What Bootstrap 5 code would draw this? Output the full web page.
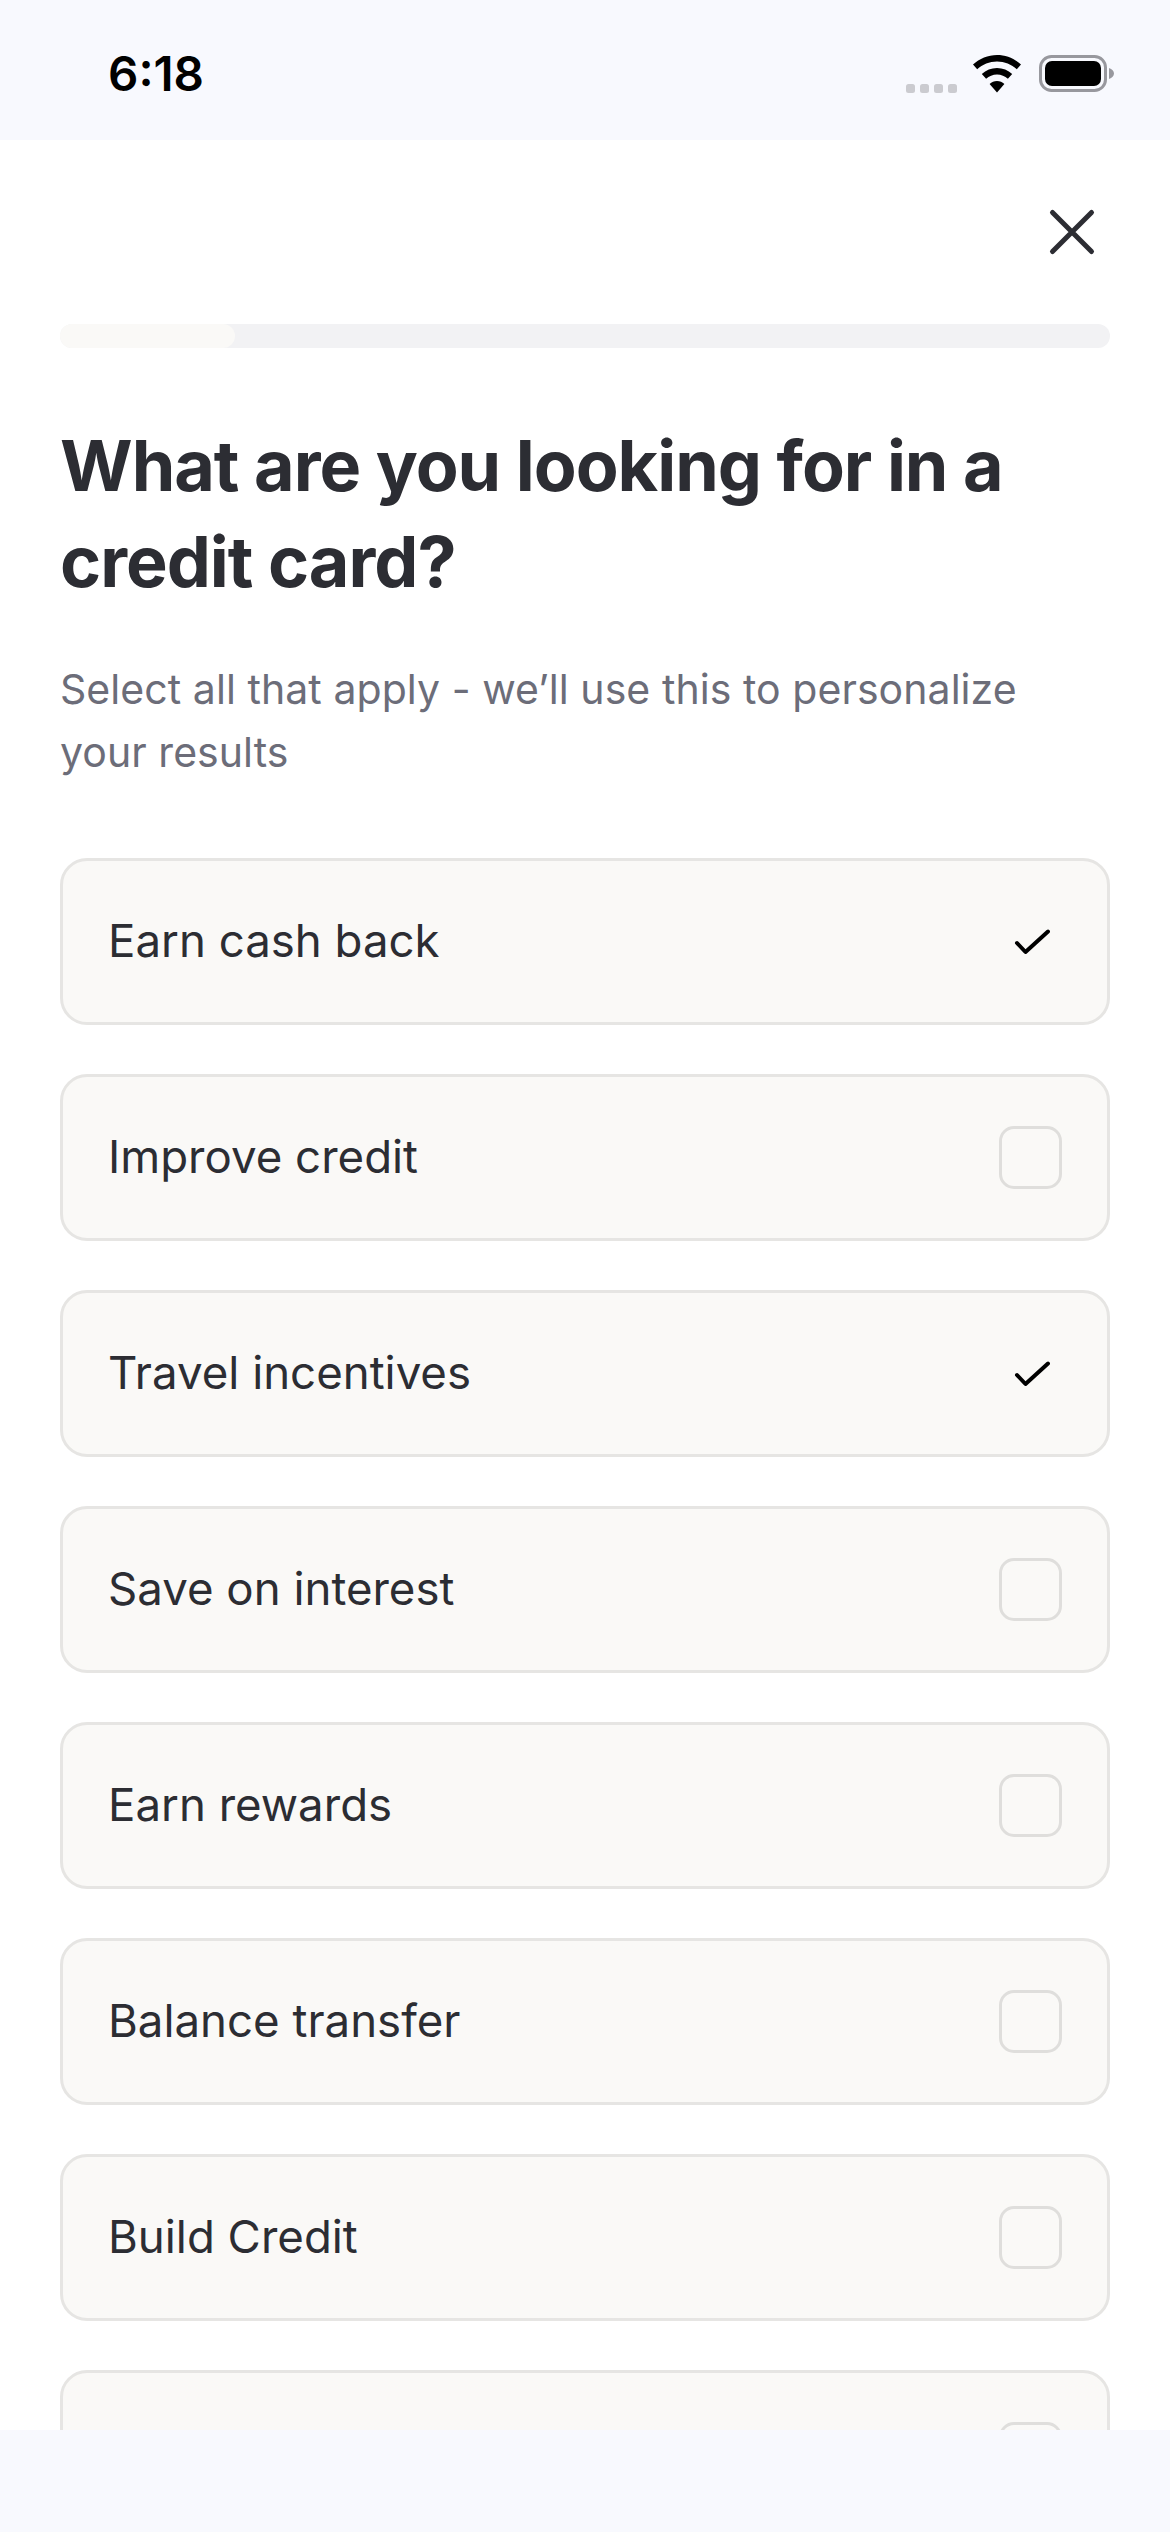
<!DOCTYPE html>
<html lang="en">
<head>
<meta charset="utf-8">
<title>Credit card goals</title>
<link href="https://cdn.jsdelivr.net/npm/bootstrap@5.3.0/dist/css/bootstrap.min.css" rel="stylesheet">
<style>
html, body { margin: 0; height: 2532px; overflow: hidden; background: #fff; }
body { font-family: Inter, "Noto Sans", sans-serif; color: #2c2d33; }
.screen { width: 1170px; height: 2532px; }
.status-area { height: 140px; background: #f8f9fe; padding: 0 55px 0 108px; flex: none; }
.clock { font-size: 47.5px; font-weight: 600; line-height: 1; color: #000; margin-top: 7px; }
.signal-icons { gap: 14px; margin-top: 7px; }
.dot-icons { margin-top: 30px; }
.body-area { min-height: 0; padding: 0 60px; background: #fff; }
.close-row { height: 184px; padding: 68px 14px 0 0; flex: none; }
.close-icon { width: 48px; height: 48px; display: block; }
.bar-track { height: 24px; background: #f2f2f4; border-radius: 12px; flex: none; }
.bar-fill { width: 175px; height: 24px; background: #faf9f7; border-radius: 12px; }
.quiz-title { font-size: 70px; line-height: 96px; font-weight: 700; color: #2c2d33; letter-spacing: -1px; margin: 70px 0 0; }
.quiz-sub { font-size: 41px; letter-spacing: .06px; line-height: 63px; color: #6c6d79; margin: 48px 0 0; font-weight: 400; }
.option-list { margin-top: 74px; gap: 49px; }
.option-item { height: 167px; flex: none; background: #faf9f7; border: 3px solid #e6e5e3; border-radius: 27px; padding: 0 45px; font-size: 45.6px; color: #2c2d33; }
.tick-box { width: 63px; height: 63px; border: 3px solid #dfdedc; border-radius: 15px; flex: none; }
.tick-slot { width: 63px; height: 63px; flex: none; }
.tick-slot svg { display: block; }
.foot-area { height: 102px; background: #f8f9fe; flex: none; }
</style>
</head>
<body>
<div class="screen d-flex flex-column">
  <div class="status-area d-flex align-items-center justify-content-between">
    <div class="clock">6:18</div>
    <div class="signal-icons d-flex align-items-center">
      <svg class="dot-icons" width="52" height="12" viewBox="0 0 52 12"><g fill="#cbcbd0"><rect x="0" y="1" width="9" height="9" rx="2.5"/><rect x="14" y="1" width="9" height="9" rx="2.5"/><rect x="28" y="1" width="9" height="9" rx="2.5"/><rect x="42" y="1" width="9" height="9" rx="2.5"/></g></svg>
      <svg width="50" height="38" viewBox="0 0 50 38"><g fill="#000"><path d="M25 0c9 0 17.500 3.600 24 9.500l-4.200 4.800C39.500 9.500 32.500 6.500 25 6.500S10.500 9.500 5.200 14.300L1 9.500C7.500 3.600 16 0 25 0z"/><path d="M25 13c5.800 0 11 2.200 15.200 6l-4.300 4.800C32.900 21.100 29.200 19.500 25 19.500s-7.900 1.600-10.900 4.300L9.800 19c4.200-3.800 9.400-6 15.200-6z"/><path d="M25 26c2.800 0 5.400 1 7.400 2.900L25 37.500l-7.400-8.600C19.600 27 22.200 26 25 26z"/></g></svg>
      <svg width="76" height="38" viewBox="0 0 76 38" style="margin-left:3px"><rect x="1.500" y="1.500" width="65" height="34" rx="11" fill="none" stroke="#98989e" stroke-width="3"/><rect x="6" y="6" width="56" height="25" rx="7" fill="#000"/><path d="M70 13c3 1 5 3 5 5.500S73 23 70 24z" fill="#98989e"/></svg>
    </div>
  </div>
  <main class="body-area flex-grow-1 overflow-hidden d-flex flex-column">
    <div class="close-row d-flex justify-content-end">
      <svg class="close-icon" viewBox="0 0 48 48" aria-label="Close"><path d="M4.500 4.500l39 39M43.500 4.500l-39 39" stroke="#2c2d33" stroke-width="5" stroke-linecap="round" fill="none"/></svg>
    </div>
    <div class="bar-track"><div class="bar-fill"></div></div>
    <h1 class="quiz-title">What are you looking for in a credit card?</h1>
    <p class="quiz-sub">Select all that apply - we’ll use this to personalize your results</p>
    <div class="option-list d-flex flex-column">
      <div class="option-item d-flex align-items-center justify-content-between"><span>Earn cash back</span><span class="tick-slot d-flex align-items-center justify-content-center"><svg width="42" height="32" viewBox="0 0 42 32"><path d="M7 17l8.500 9L38 5.500" fill="none" stroke="#000" stroke-width="4" stroke-linecap="round" stroke-linejoin="round"/></svg></span></div>
      <div class="option-item d-flex align-items-center justify-content-between"><span>Improve credit</span><span class="tick-box"></span></div>
      <div class="option-item d-flex align-items-center justify-content-between"><span>Travel incentives</span><span class="tick-slot d-flex align-items-center justify-content-center"><svg width="42" height="32" viewBox="0 0 42 32"><path d="M7 17l8.500 9L38 5.500" fill="none" stroke="#000" stroke-width="4" stroke-linecap="round" stroke-linejoin="round"/></svg></span></div>
      <div class="option-item d-flex align-items-center justify-content-between"><span>Save on interest</span><span class="tick-box"></span></div>
      <div class="option-item d-flex align-items-center justify-content-between"><span>Earn rewards</span><span class="tick-box"></span></div>
      <div class="option-item d-flex align-items-center justify-content-between"><span>Balance transfer</span><span class="tick-box"></span></div>
      <div class="option-item d-flex align-items-center justify-content-between"><span>Build Credit</span><span class="tick-box"></span></div>
      <div class="option-item d-flex align-items-center justify-content-between"><span></span><span class="tick-box"></span></div>
    </div>
  </main>
  <div class="foot-area"></div>
</div>
<script src="https://cdn.jsdelivr.net/npm/bootstrap@5.3.0/dist/js/bootstrap.bundle.min.js"></script>
</body>
</html>
